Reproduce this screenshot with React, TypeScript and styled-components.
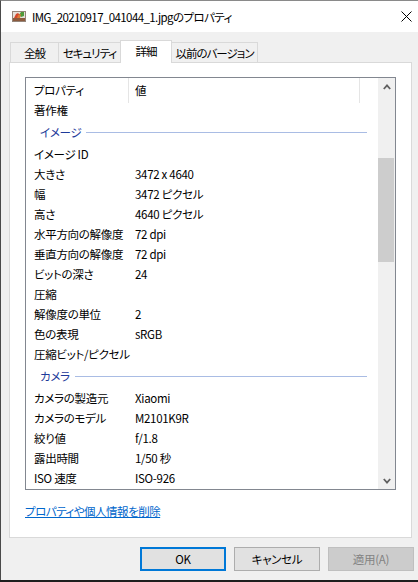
import React from 'react';
import styled, { createGlobalStyle } from 'styled-components';

const GlobalStyle = createGlobalStyle`
    * {
        box-sizing: border-box;
    }
    html,
    body {
        margin: 0;
        padding: 0;
        background: #1e1e1e;
    }
    body {
        font-family: 'Noto Sans CJK JP', sans-serif;
        font-size: 11.5px;
        letter-spacing: -0.3px;
        color: #000;
        font-feature-settings: 'palt';
    }
`;

const Window = styled.div`
    display: flex;
    flex-direction: column;
    width: 418px;
    height: 580px;
    border-left: 1px solid #4a4a4a;
    border-top: 1px solid #8a8a8a;
    background: #f0f0f0;
`;

const TitleBar = styled.div`
    display: flex;
    align-items: center;
    height: 31px;
    padding: 0 6px 0 10px;
    background: #fff;
`;

const TitleText = styled.span`
    flex: 1;
    margin-left: 5px;
    line-height: 16px;
    letter-spacing: -0.6px;
    white-space: nowrap;
`;

const TabRow = styled.div`
    display: flex;
    align-items: flex-end;
    height: 22px;
    margin: 8px 0 0 9px;
`;

const Tab = styled.div<{ $width: number; $active?: boolean }>`
    position: relative;
    z-index: ${(p) => (p.$active ? 1 : 0)};
    display: flex;
    align-items: center;
    justify-content: center;
    width: ${(p) => p.$width}px;
    height: ${(p) => (p.$active ? 23 : 20)}px;
    margin-right: -1px;
    margin-bottom: ${(p) => (p.$active ? -1 : 0)}px;
    padding-bottom: ${(p) => (p.$active ? 3 : 0)}px;
    border: 1px solid #d9d9d9;
    border-bottom: none;
    background: ${(p) => (p.$active ? '#fff' : '#f0f0f0')};
    letter-spacing: -1px;
    white-space: nowrap;
`;

const TabPanel = styled.div`
    display: flex;
    flex-direction: column;
    height: 476px;
    margin: 0 6px 0 8px;
    padding: 14px 0 0 15px;
    border: 1px solid #d9d9d9;
    background: #fff;
`;

const ListView = styled.div`
    display: flex;
    width: 371px;
    height: 413px;
    border: 1px solid #828790;
`;

const ListMain = styled.div`
    display: flex;
    flex-direction: column;
    flex: 1;
    min-width: 0;
`;

const HeaderRow = styled.div`
    display: flex;
    height: 25px;
    flex-shrink: 0;
`;

const HeaderCell = styled.div<{ $width: number; $pad: number }>`
    display: flex;
    align-items: center;
    width: ${(p) => p.$width}px;
    padding-left: ${(p) => p.$pad}px;
    padding-bottom: 1px;
    border-right: 1px solid #e5e5e5;
`;

const ListBody = styled.div`
    flex: 1;
    overflow: hidden;
`;

// the list is scrolled a few pixels past its first row
const ScrollContent = styled.div<{ $scroll: number }>`
    margin-top: ${(p) => -p.$scroll}px;
`;

const Row = styled.div`
    display: flex;
    align-items: center;
    height: 20px;
    white-space: nowrap;
`;

const NameCell = styled.div`
    width: 103px;
    padding-left: 8px;
`;

const ValueCell = styled.div`
    padding-left: 6px;
`;

const Group = styled.div`
    display: flex;
    align-items: center;
    height: 24px;
    padding: 0 11px 0 14px;
    color: #1e3a9a;
`;

const GroupLine = styled.div`
    flex: 1;
    height: 1px;
    margin-left: 5px;
    background: #a9bce4;
`;

const ScrollBar = styled.div`
    display: flex;
    flex-direction: column;
    width: 17px;
    background: #f0f0f0;
`;

const ArrowButton = styled.div`
    display: flex;
    align-items: center;
    justify-content: center;
    height: 17px;
`;

const Thumb = styled.div`
    height: 104px;
    margin: 63px 1px 0 0;
    background: #cdcdcd;
`;

const Spacer = styled.div`
    flex: 1;
`;

const ResetLink = styled.a`
    align-self: flex-start;
    margin-top: 14px;
    line-height: 15px;
    letter-spacing: -0.5px;
    color: #0066cc;
    text-decoration: underline;
    cursor: pointer;
`;

const ButtonRow = styled.div`
    display: flex;
    justify-content: flex-end;
    gap: 8px;
    margin-top: 9px;
    padding-right: 4px;
`;

type ButtonKind = 'default' | 'normal' | 'disabled';

const DialogButton = styled.button<{ $kind: ButtonKind }>`
    width: 86px;
    height: 24px;
    padding: 0;
    font-family: inherit;
    font-size: 11.5px;
    letter-spacing: -0.3px;
    font-feature-settings: 'palt';
    color: ${(p) => (p.$kind === 'disabled' ? '#838383' : '#000')};
    background: ${(p) => (p.$kind === 'disabled' ? '#cccccc' : '#e1e1e1')};
    border: ${(p) =>
        p.$kind === 'default'
            ? '2px solid #0078d7'
            : p.$kind === 'disabled'
            ? '1px solid #bfbfbf'
            : '1px solid #adadad'};
`;

const PictureIcon = () => (
    <svg width="16" height="16" viewBox="0 0 16 16">
        <rect x="1.5" y="2.5" width="13" height="10" fill="#e6e1da" stroke="#94857a" />
        <rect x="2" y="9" width="12" height="3" fill="#8c5b3e" />
        <path d="M3 9 L5 5 L7 4 L9 6 L8 9 Z" fill="#d4472c" />
        <path d="M8 6 L10 3 L13 3 L13 7 L10 8 Z" fill="#4f9a3a" />
        <path d="M6 9 L7 6 L10 5 L9 9 Z" fill="#e07a35" />
    </svg>
);

const CloseIcon = () => (
    <svg width="11" height="11" viewBox="0 0 11 11">
        <path d="M0.5 0.5 L10.5 10.5 M10.5 0.5 L0.5 10.5" stroke="#000" strokeWidth="1" />
    </svg>
);

const Chevron = ({ down }: { down?: boolean }) => (
    <svg width="8" height="6" viewBox="0 0 8 6">
        <path
            d={down ? 'M0.8 1 L4 4.6 L7.2 1' : 'M0.8 5 L4 1.4 L7.2 5'}
            fill="none"
            stroke="#606060"
            strokeWidth="1.8"
        />
    </svg>
);

type Item = { kind: 'row'; name: string; value?: string } | { kind: 'group'; name: string };

const items: Item[] = [
    { kind: 'row', name: '著作権' },
    { kind: 'group', name: 'イメージ' },
    { kind: 'row', name: 'イメージ ID' },
    { kind: 'row', name: '大きさ', value: '3472 x 4640' },
    { kind: 'row', name: '幅', value: '3472 ピクセル' },
    { kind: 'row', name: '高さ', value: '4640 ピクセル' },
    { kind: 'row', name: '水平方向の解像度', value: '72 dpi' },
    { kind: 'row', name: '垂直方向の解像度', value: '72 dpi' },
    { kind: 'row', name: 'ビットの深さ', value: '24' },
    { kind: 'row', name: '圧縮' },
    { kind: 'row', name: '解像度の単位', value: '2' },
    { kind: 'row', name: '色の表現', value: 'sRGB' },
    { kind: 'row', name: '圧縮ビット/ピクセル' },
    { kind: 'group', name: 'カメラ' },
    { kind: 'row', name: 'カメラの製造元', value: 'Xiaomi' },
    { kind: 'row', name: 'カメラのモデル', value: 'M2101K9R' },
    { kind: 'row', name: '絞り値', value: 'f/1.8' },
    { kind: 'row', name: '露出時間', value: '1/50 秒' },
    { kind: 'row', name: 'ISO 速度', value: 'ISO-926' },
];

const tabs = [
    { label: '全般', width: 49 },
    { label: 'セキュリティ', width: 63 },
    { label: '詳細', width: 52, active: true },
    { label: '以前のバージョン', width: 87 },
];

export default function App() {
    return (
        <>
            <GlobalStyle />
            <Window>
                <TitleBar>
                    <PictureIcon />
                    <TitleText>IMG_20210917_041044_1.jpgのプロパティ</TitleText>
                    <CloseIcon />
                </TitleBar>
                <TabRow>
                    {tabs.map((t) => (
                        <Tab key={t.label} $width={t.width} $active={t.active}>
                            {t.label}
                        </Tab>
                    ))}
                </TabRow>
                <TabPanel>
                    <ListView>
                        <ListMain>
                            <HeaderRow>
                                <HeaderCell $width={103} $pad={8}>
                                    プロパティ
                                </HeaderCell>
                                <HeaderCell $width={231} $pad={6}>
                                    値
                                </HeaderCell>
                            </HeaderRow>
                            <ListBody>
                                <ScrollContent $scroll={3}>
                                    {items.map((item) =>
                                        item.kind === 'group' ? (
                                            <Group key={item.name}>
                                                {item.name}
                                                <GroupLine />
                                            </Group>
                                        ) : (
                                            <Row key={item.name}>
                                                <NameCell>{item.name}</NameCell>
                                                <ValueCell>{item.value}</ValueCell>
                                            </Row>
                                        )
                                    )}
                                </ScrollContent>
                            </ListBody>
                        </ListMain>
                        <ScrollBar>
                            <ArrowButton>
                                <Chevron />
                            </ArrowButton>
                            <Thumb />
                            <Spacer />
                            <ArrowButton>
                                <Chevron down />
                            </ArrowButton>
                        </ScrollBar>
                    </ListView>
                    <ResetLink>プロパティや個人情報を削除</ResetLink>
                </TabPanel>
                <ButtonRow>
                    <DialogButton $kind="default">OK</DialogButton>
                    <DialogButton $kind="normal">キャンセル</DialogButton>
                    <DialogButton $kind="disabled">適用(A)</DialogButton>
                </ButtonRow>
            </Window>
        </>
    );
}
